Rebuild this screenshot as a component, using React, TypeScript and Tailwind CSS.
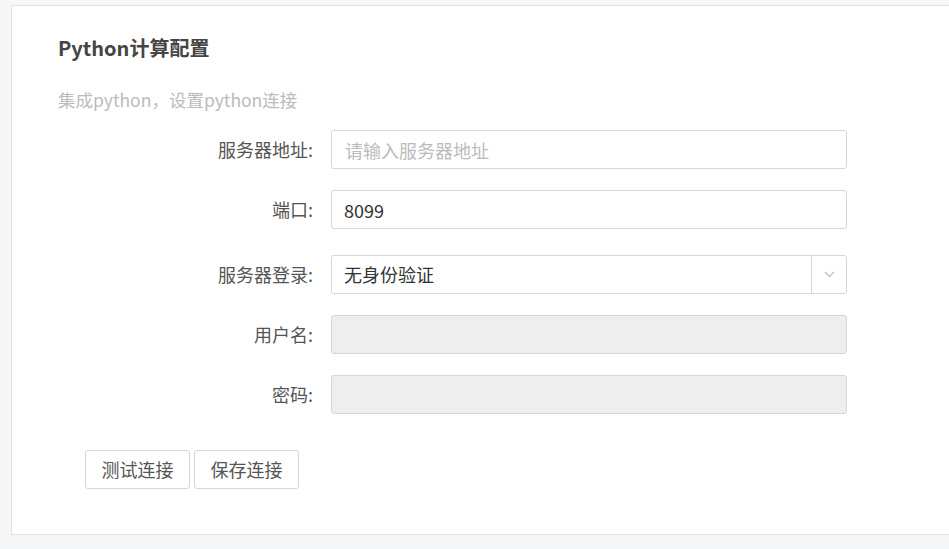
import React from 'react';

const font = { fontFamily: '"Noto Sans CJK SC", "Noto Sans", sans-serif' };

const Label: React.FC<{ text: string }> = ({ text }) => (
  <div className="w-[302px] pr-[1px] text-right text-[18px] text-[#555]">{text}:</div>
);

export default function App() {
  return (
    <div className="w-[949px] h-[549px] bg-[#f6f7f9] pt-[5px] pl-[11px] overflow-hidden" style={font}>
      <div className="h-[530px] bg-white border border-r-0 border-[#e3e3e3]">
        {/* Header */}
        <div className="pl-[46px] pt-[28px]">
          <h2 className="text-[20px] font-bold leading-[28px] text-[#454545]">Python计算配置</h2>
          <p className="mt-[26px] text-[17.5px] leading-[24px] text-[#bbb]">集成python，设置python连接</p>
        </div>

        {/* Form */}
        <div className="mt-[18px] flex flex-col">
          <div className="flex items-center">
            <Label text="服务器地址" />
            <input
              className="ml-[17px] w-[516px] h-[39px] rounded-[3px] border border-[#d6d6d6] px-[13px] text-[18px] text-[#333] placeholder:text-[#bbb] outline-none"
              placeholder="请输入服务器地址"
            />
          </div>
          <div className="mt-[21px] flex items-center">
            <Label text="端口" />
            <input
              className="ml-[17px] w-[516px] h-[39px] rounded-[3px] border border-[#d6d6d6] px-[12px] text-[18px] text-[#333] outline-none"
              defaultValue="8099"
            />
          </div>
          <div className="mt-[26px] flex items-center">
            <Label text="服务器登录" />
            <div className="ml-[17px] w-[516px] h-[39px] rounded-[3px] border border-[#d6d6d6] flex items-center">
              <span className="flex-1 px-[12px] text-[18px] text-[#333]">无身份验证</span>
              <div className="w-[35px] h-full border-l border-[#d6d6d6] flex items-center justify-center">
                <svg width="11" height="7" viewBox="0 0 11 7" fill="none">
                  <path d="M1 1l4.5 4.5L10 1" stroke="#bbb" strokeWidth="1.1" />
                </svg>
              </div>
            </div>
          </div>
          <div className="mt-[21px] flex items-center">
            <Label text="用户名" />
            <div className="ml-[17px] w-[516px] h-[39px] rounded-[3px] border border-[#d6d6d6] bg-[#eeeeee]" />
          </div>
          <div className="mt-[21px] flex items-center">
            <Label text="密码" />
            <div className="ml-[17px] w-[516px] h-[39px] rounded-[3px] border border-[#d6d6d6] bg-[#eeeeee]" />
          </div>
        </div>

        {/* Actions */}
        <div className="mt-[36px] pl-[73px] flex gap-[4px]">
          <button className="w-[105px] h-[39px] rounded-[3px] border border-[#d6d6d6] bg-white text-[18px] text-[#555]">测试连接</button>
          <button className="w-[105px] h-[39px] rounded-[3px] border border-[#d6d6d6] bg-white text-[18px] text-[#555]">保存连接</button>
        </div>
      </div>
    </div>
  );
}
